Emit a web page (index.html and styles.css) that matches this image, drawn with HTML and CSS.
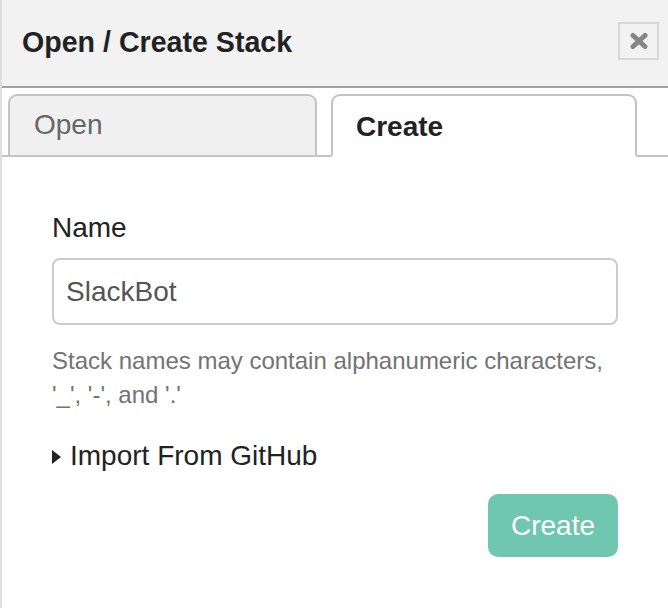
FILE: index.html
```html
<!DOCTYPE html>
<html lang="en">
<head>
<meta charset="utf-8">
<title>Open / Create Stack</title>
<link rel="stylesheet" href="styles.css">
</head>
<body>
<div class="modal">
  <header class="modal-header">
    <h1 class="modal-title">Open / Create Stack</h1>
    <button class="close-btn" type="button" aria-label="Close">
      <svg class="close-icon" viewBox="0 0 20 18" width="20" height="18">
        <path d="M4 3.5 L16 14.5 M16 3.5 L4 14.5" stroke="#858585" stroke-width="5" stroke-linecap="round" fill="none"/>
      </svg>
    </button>
  </header>
  <nav class="tabs">
    <div class="tab tab-open">Open</div>
    <div class="tab tab-create active">Create</div>
  </nav>
  <section class="tab-body">
    <label class="field-label" for="name">Name</label>
    <input class="field-input" id="name" type="text" value="SlackBot">
    <p class="help">Stack names may contain alphanumeric characters,<br>'_', '-', and '.'</p>
    <div class="import"><span class="caret"></span>Import From GitHub</div>
    <div class="actions">
      <button class="create-btn" type="button">Create</button>
    </div>
  </section>
</div>
</body>
</html>
```

FILE: styles.css
```css
html, body {
  margin: 0;
  padding: 0;
  background: #ffffff;
}

body {
  font-family: "Liberation Sans", Arial, sans-serif;
  color: #222222;
}

.modal {
  width: 668px;
  height: 608px;
  box-sizing: border-box;
  border-left: 2px solid #dedede;
  overflow: hidden;
}

.modal-header {
  height: 86px;
  box-sizing: content-box;
  background: #f2f2f2;
  border-bottom: 2px solid #a3a3a3;
  display: flex;
  align-items: flex-start;
  justify-content: space-between;
  padding: 0 9px 0 20px;
}

.modal-title {
  margin: 22px 0 0 0;
  font-size: 28.6px;
  line-height: 40px;
  font-weight: bold;
  color: #222222;
}

.close-btn {
  margin-top: 22px;
  width: 41px;
  height: 38px;
  box-sizing: border-box;
  border: 2px solid #d8d8d8;
  background: #f2f2f2;
  padding: 0;
  display: flex;
  align-items: center;
  justify-content: center;
}

.close-icon {
  display: block;
  filter: blur(0.4px);
}

.tabs {
  display: flex;
  gap: 14px;
  padding: 6px 0 0 6px;
  height: 61px;
  border-bottom: 2px solid #c4c4c4;
}

.tab {
  height: 63px;
  box-sizing: border-box;
  border: 2px solid #c4c4c4;
  border-radius: 9px 9px 0 0;
  padding: 9px 0 0 24px;
  font-size: 28px;
  line-height: 40px;
}

.tab-open {
  width: 309px;
  background: #f0f0f0;
  color: #666666;
}

.tab-create {
  width: 306px;
  padding-top: 11px;
  padding-left: 23px;
  font-weight: bold;
  color: #222222;
}

.tab.active {
  background: #ffffff;
  border-bottom-color: #ffffff;
}

.tab-body {
  display: flex;
  flex-direction: column;
  padding: 51px 50px 0 50px;
}

.field-label {
  font-size: 28px;
  line-height: 40px;
  color: #222222;
  margin-bottom: 10px;
}

.field-input {
  height: 67px;
  box-sizing: border-box;
  border: 2px solid #cccccc;
  border-radius: 8px;
  padding: 0 12px;
  font-family: "Liberation Sans", Arial, sans-serif;
  font-size: 28px;
  color: #555555;
  outline: none;
  margin: 0;
}

.help {
  margin: 19px 0 0 0;
  font-size: 24px;
  line-height: 34px;
  color: #737373;
}

.import {
  margin-top: 24px;
  font-size: 28px;
  line-height: 40px;
  color: #222222;
  display: flex;
  align-items: center;
}

.caret {
  flex: none;
  width: 0;
  height: 0;
  border-left: 9px solid #222222;
  border-top: 7px solid transparent;
  border-bottom: 7px solid transparent;
  margin: 2px 9px 0 0;
}

.actions {
  display: flex;
  justify-content: flex-end;
  margin-top: 18px;
}

.create-btn {
  width: 130px;
  height: 63px;
  border: none;
  border-radius: 10px;
  background: #6ec7ae;
  color: #ffffff;
  font-family: "Liberation Sans", Arial, sans-serif;
  font-size: 28px;
  padding: 0;
}
```
